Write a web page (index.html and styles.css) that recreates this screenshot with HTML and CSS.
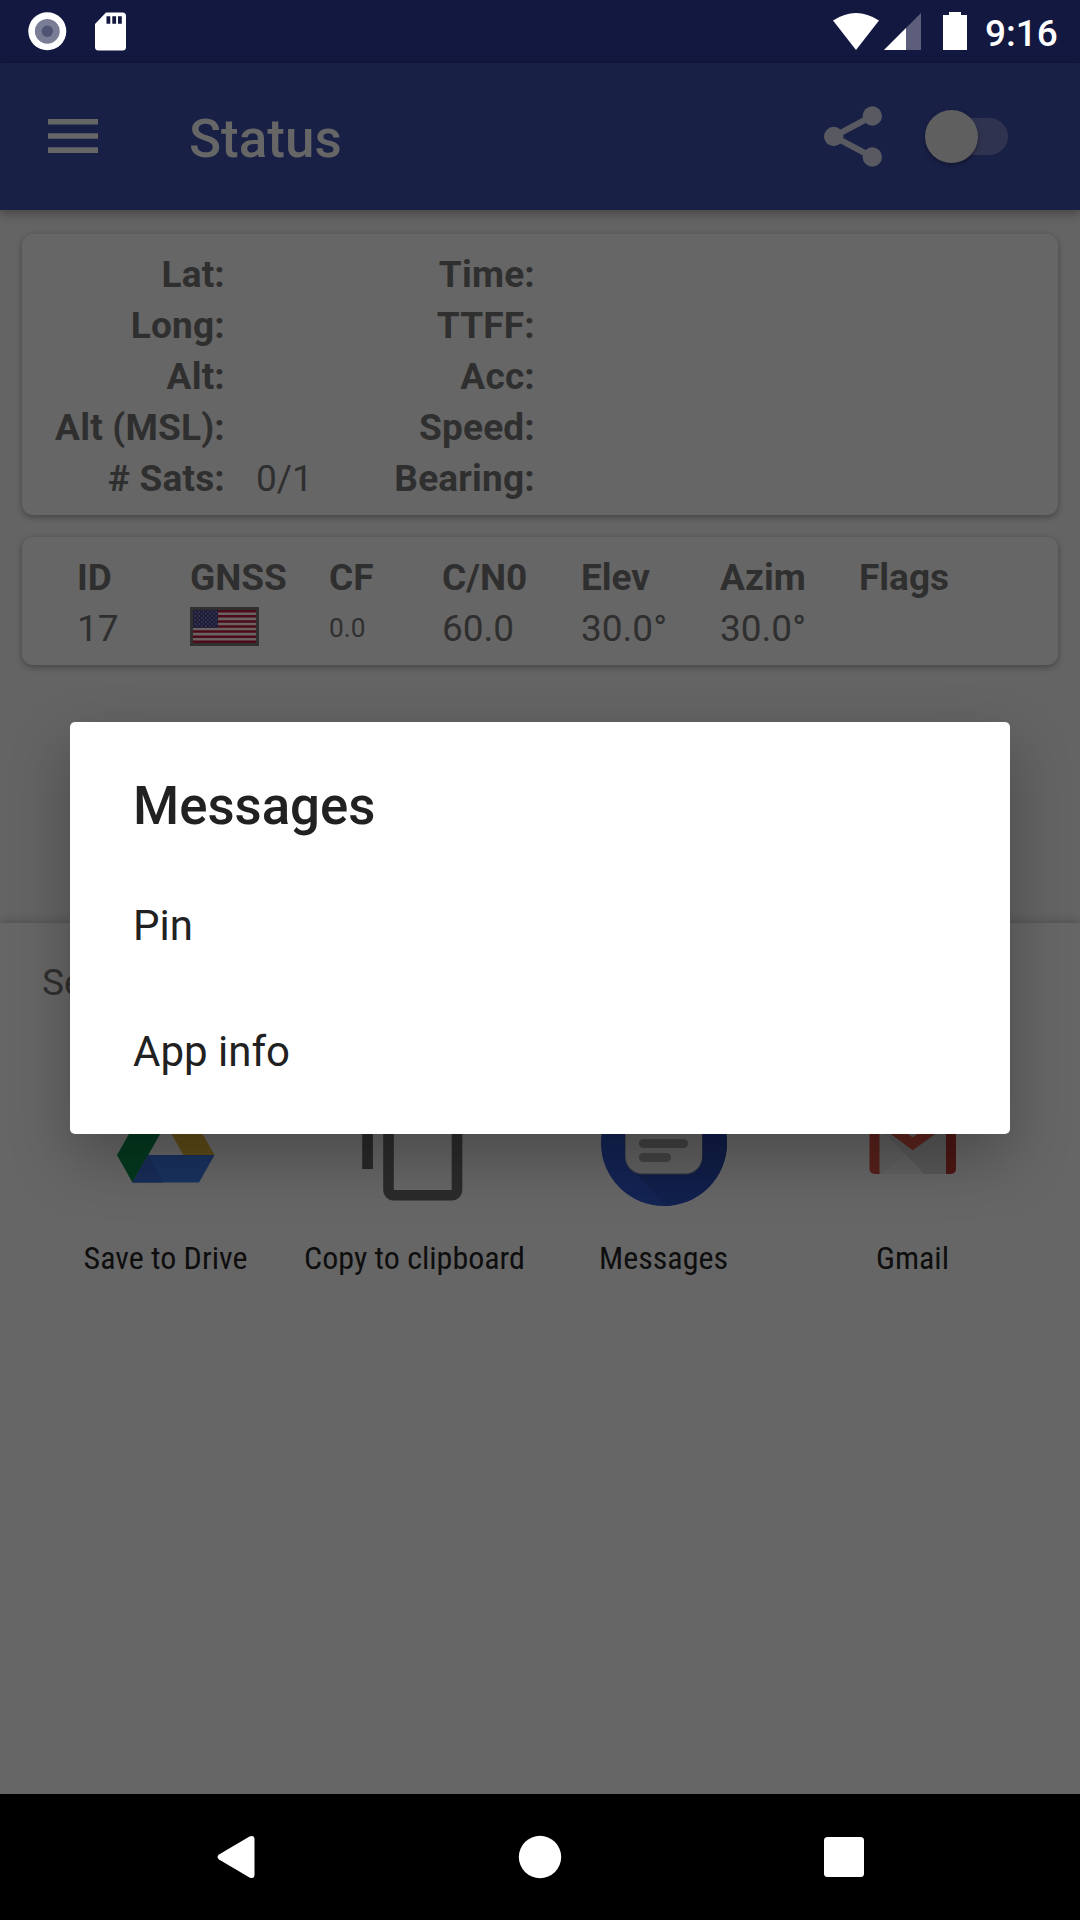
FILE: index.html
```html
<!DOCTYPE html>
<html lang="en">
<head>
<meta charset="utf-8">
<title>Status</title>
<link rel="stylesheet" href="styles.css">
</head>
<body>
<div class="screen">
  <header class="statusbar">
    <svg class="status-left" width="140" height="63" viewBox="0 0 140 63">
      <circle cx="47.3" cy="31.3" r="19" fill="#fff"/>
      <circle cx="47.3" cy="31.3" r="12.4" fill="#7a7d96"/>
      <circle cx="47.3" cy="31.3" r="5.7" fill="#4f5472"/>
      <path d="M106 12.5h16.5a3.500 3.500 0 0 1 3.500 3.500v31a3.500 3.500 0 0 1-3.500 3.500h-24a3.500 3.500 0 0 1-3.500-3.500V24z" fill="#fff"/>
      <path d="M106.500 16.300h3.800v7.500h-3.800zM112.300 16.300h3.800v7.500h-3.800zM118 16.300h3.800v7.500h-3.800z" fill="#131840"/>
    </svg>
    <div class="status-right">
      <svg width="150" height="63" viewBox="830 0 150 63">
        <path d="M833 20.500Q856 5.500 879 20.500L856 50z" fill="#fff"/>
        <path d="M921 13v37h-37z" fill="#5c5e7b"/>
        <path d="M906 28v22h-22z" fill="#fff"/>
        <path d="M949 12h12v3h6v35h-24V15h6z" fill="#fff"/>
      </svg>
      <span class="clock">9:16</span>
    </div>
  </header>

  <div class="toolbar">
    <svg class="menu-icon" width="50" height="36" viewBox="0 0 50 36"><path d="M0 0h50v5.600H0zM0 14.200h50v5.600H0zM0 28.300h50v5.600H0z" fill="#666"/></svg>
    <h1 class="title">Status</h1>
    <svg class="share-icon" width="60" height="64" viewBox="823 104.500 60 64">
      <path d="M872.300 115.500L833.700 136l38.600 20.500" fill="none" stroke="#595961" stroke-width="6"/>
      <g fill="#595961"><circle cx="833.700" cy="136" r="9.700"/><circle cx="872.300" cy="115.500" r="9.700"/><circle cx="872.300" cy="156.500" r="9.700"/></g>
    </svg>
    <div class="switch"><span class="thumb"></span></div>
  </div>

  <main class="content">
    <section class="card location">
      <span class="label">Lat:</span><span></span><span class="label">Time:</span><span></span>
      <span class="label">Long:</span><span></span><span class="label">TTFF:</span><span></span>
      <span class="label">Alt:</span><span></span><span class="label">Acc:</span><span></span>
      <span class="label">Alt (MSL):</span><span></span><span class="label">Speed:</span><span></span>
      <span class="label"># Sats:</span><span class="value">0/1</span><span class="label">Bearing:</span><span></span>
    </section>
    <section class="card satellites">
      <b>ID</b><b>GNSS</b><b>CF</b><b>C/N0</b><b>Elev</b><b>Azim</b><b>Flags</b>
      <span>17</span>
      <span class="flag">
        <svg width="69" height="39" viewBox="0 0 69 39">
          <defs><pattern id="stars" width="4.200" height="4" patternUnits="userSpaceOnUse"><circle cx="1" cy="1" r=".75" fill="#4c4c62"/><circle cx="3.100" cy="3" r=".75" fill="#4c4c62"/></pattern></defs>
          <path d="M0 0h69v39H0z" fill="#303030"/>
          <path d="M3 3h63v33H3z" fill="#6b6263"/>
          <path d="M3 4.270h63M3 9.350h63M3 14.420h63M3 19.500h63M3 24.580h63M3 29.650h63M3 34.730h63" stroke="#4d0b18" stroke-width="2.540"/>
          <path d="M3 3h25v17.800H3z" fill="#1b1b38"/>
          <path d="M3.500 3.500h24v17H3.500z" fill="url(#stars)"/>
        </svg>
      </span>
      <span class="small">0.0</span><span>60.0</span><span>30.0°</span><span>30.0°</span><span></span>
    </section>
  </main>

  <section class="sheet">
    <p class="sheet-title">Send</p>
    <div class="targets">
      <div class="target">
        <svg width="126" height="126" viewBox="103 1080 126 126">
          <path d="M117 1155l33.200-58 15.500 27.200-33.200 58.300z" fill="#04391f"/>
          <path d="M150.200 1097h31.200l33.100 58h-31z" fill="#5d4a17"/>
          <path d="M148 1155h66.500l-15.500 27.500h-66.500z" fill="#19325f"/>
          <path d="M148 1155l15.500 27.500h-31z" fill="#172d58"/>
        </svg>
        <span>Save to Drive</span>
      </div>
      <div class="target">
        <svg width="126" height="126" viewBox="352 1080 126 126">
          <path d="M362.200 1095h10.700v74h-10.700z" fill="#292929"/>
          <rect x="388.500" y="1110" width="68.500" height="85.200" rx="5" fill="none" stroke="#2b2b2b" stroke-width="10.600"/>
        </svg>
        <span>Copy to clipboard</span>
      </div>
      <div class="target">
        <svg width="126" height="126" viewBox="601 1080 126 126">
          <defs><linearGradient id="fold" x1="0" y1="0" x2="0" y2="1"><stop offset=".6" stop-color="#101d47"/><stop offset="1" stop-color="#12214f"/></linearGradient><clipPath id="disc"><circle cx="664" cy="1143" r="63"/></clipPath></defs>
          <circle cx="664" cy="1143" r="63" fill="#132353"/>
          <path d="M631 1168l35 39 65-17v-52l-31-34z" fill="url(#fold)" clip-path="url(#disc)"/>
          <rect x="625" y="1109" width="77.500" height="65.600" rx="17" fill="#323743"/>
          <rect x="625.500" y="1108" width="76.500" height="65.500" rx="17" fill="#606060"/>
          <rect x="639" y="1139" width="49" height="9" rx="4.500" fill="#414141"/>
          <rect x="639" y="1153" width="32" height="9" rx="4.500" fill="#434343"/>
        </svg>
        <span>Messages</span>
      </div>
      <div class="target">
        <svg width="126" height="126" viewBox="850 1080 126 126">
          <path d="M876 1110h73v64h-73z" fill="#5c5c5c"/>
          <path d="M879 1130l27 24-27 20z" fill="#5e5e5e"/>
          <path d="M884 1132l40 42h23v-38l-18-2-16 16z" fill="#585858"/>
          <path d="M879.500 1174l26.500-19 18 19z" fill="#616161"/>
          <path d="M869.500 1112h10v62h-5a5 5 0 0 1-5-5z" fill="#57201b"/>
          <path d="M946 1112h10v57a5 5 0 0 1-5 5h-5z" fill="#4c1713"/>
          <path d="M870 1119l42.700 31.300L956 1119v-14l-43.300 32.500L870 1105z" fill="#5c241e"/>
        </svg>
        <span>Gmail</span>
      </div>
    </div>
  </section>

  <nav class="navbar">
    <svg width="1080" height="126" viewBox="0 1794 1080 126" fill="#fff">
      <path d="M219 1854.500l30.500-18q5-2 5 3v35q0 5-5 3l-30.500-18q-3-2.500 0-5z"/>
      <circle cx="540" cy="1857" r="21.200"/>
      <rect x="824" y="1837" width="40" height="40" rx="3.500"/>
    </svg>
  </nav>

  <div class="dialog">
    <h2>Messages</h2>
    <p>Pin</p>
    <p>App info</p>
  </div>
</div>
</body>
</html>
```
FILE: styles.css
```css
* { box-sizing: border-box; margin: 0; padding: 0; }
body { background: #666; font-family: Roboto, sans-serif; }
svg { display: block; flex: none; }

.screen {
  position: relative;
  display: flex;
  flex-direction: column;
  width: 1080px;
  height: 1920px;
  overflow: hidden;
  background: #646464;
}

.statusbar {
  display: flex;
  justify-content: space-between;
  height: 63px;
  background: #131840;
}
.status-right { display: flex; width: 250px; gap: 5px; }
.clock {
  color: #fff;
  font-size: 37px;
  font-weight: 500;
  line-height: 67px;
}

.toolbar {
  display: flex;
  align-items: center;
  height: 147px;
  padding-left: 48px;
  background: #192046;
  box-shadow: 0 3px 10px rgba(0, 0, 0, .35);
  z-index: 1;
}
.title {
  width: 634px;
  margin-left: 91px;
  padding-top: 4px;
  color: #666;
  font-size: 53px;
  font-weight: 500;
  line-height: 62px;
}
.switch {
  display: flex;
  align-items: center;
  width: 74px;
  height: 37px;
  margin-left: 51px;
  border-radius: 19px;
  background: #30334f;
}
.thumb {
  width: 53px;
  height: 53px;
  margin-left: -9px;
  border-radius: 50%;
  background: #5f5f5f;
  box-shadow: 0 2px 4px rgba(0, 0, 0, .35);
}

.content {
  display: flex;
  flex-direction: column;
  gap: 22px;
  height: 713px;
  padding: 24px 22px 0;
}
.card {
  display: grid;
  flex: none;
  border-radius: 11px;
  background: #666;
  box-shadow: 0 2px 6px rgba(0, 0, 0, .33);
  color: #2f2f2f;
  font-size: 37px;
  line-height: 43px;
}
.location {
  grid-template-columns: 203px 106px 204px 1fr;
  grid-auto-rows: 51px;
  height: 281px;
  padding: 19px 0 0 0;
}
.label { font-weight: 700; letter-spacing: .2px; text-align: right; }
.value { padding-left: 31px; }
.satellites {
  grid-template-columns: 113px 139px 113px 139px 139px 139px 1fr;
  grid-auto-rows: 51px;
  height: 128px;
  padding: 19px 0 0 55px;
}
.small { font-size: 26.25px; line-height: 42px; }

.sheet {
  height: 871px;
  flex: none;
  padding: 0 41px;
  background: #666;
  box-shadow: 0 0 10px rgba(0, 0, 0, .25);
}
.sheet-title {
  height: 157px;
  padding: 38px 0 0 1px;
  color: #2f2f2f;
  font-size: 37px;
  line-height: 43px;
}
.targets { display: grid; grid-template-columns: repeat(4, 249px); margin-right: -10px; }
.target { display: flex; flex-direction: column; align-items: center; gap: 34px; }
.target span {
  color: #0e0e0e;
  font-family: "Roboto Condensed", Roboto, sans-serif;
  font-size: 32px;
  font-stretch: 75%;
  line-height: 37px;
  white-space: nowrap;
}

.navbar { height: 126px; flex: none; background: #000; z-index: 1; }

.dialog {
  position: absolute;
  left: 70px;
  top: 722px;
  width: 940px;
  height: 412px;
  padding: 53px 63px 0;
  border-radius: 5px;
  background: #fff;
  box-shadow: 0 24px 60px rgba(0, 0, 0, .27);
  color: #212121;
  z-index: 2;
}
.dialog h2 { height: 88px; font-size: 52.75px; font-weight: 500; line-height: 62px; }
.dialog p { height: 126px; padding-top: 38px; font-size: 42px; line-height: 50px; }
```
